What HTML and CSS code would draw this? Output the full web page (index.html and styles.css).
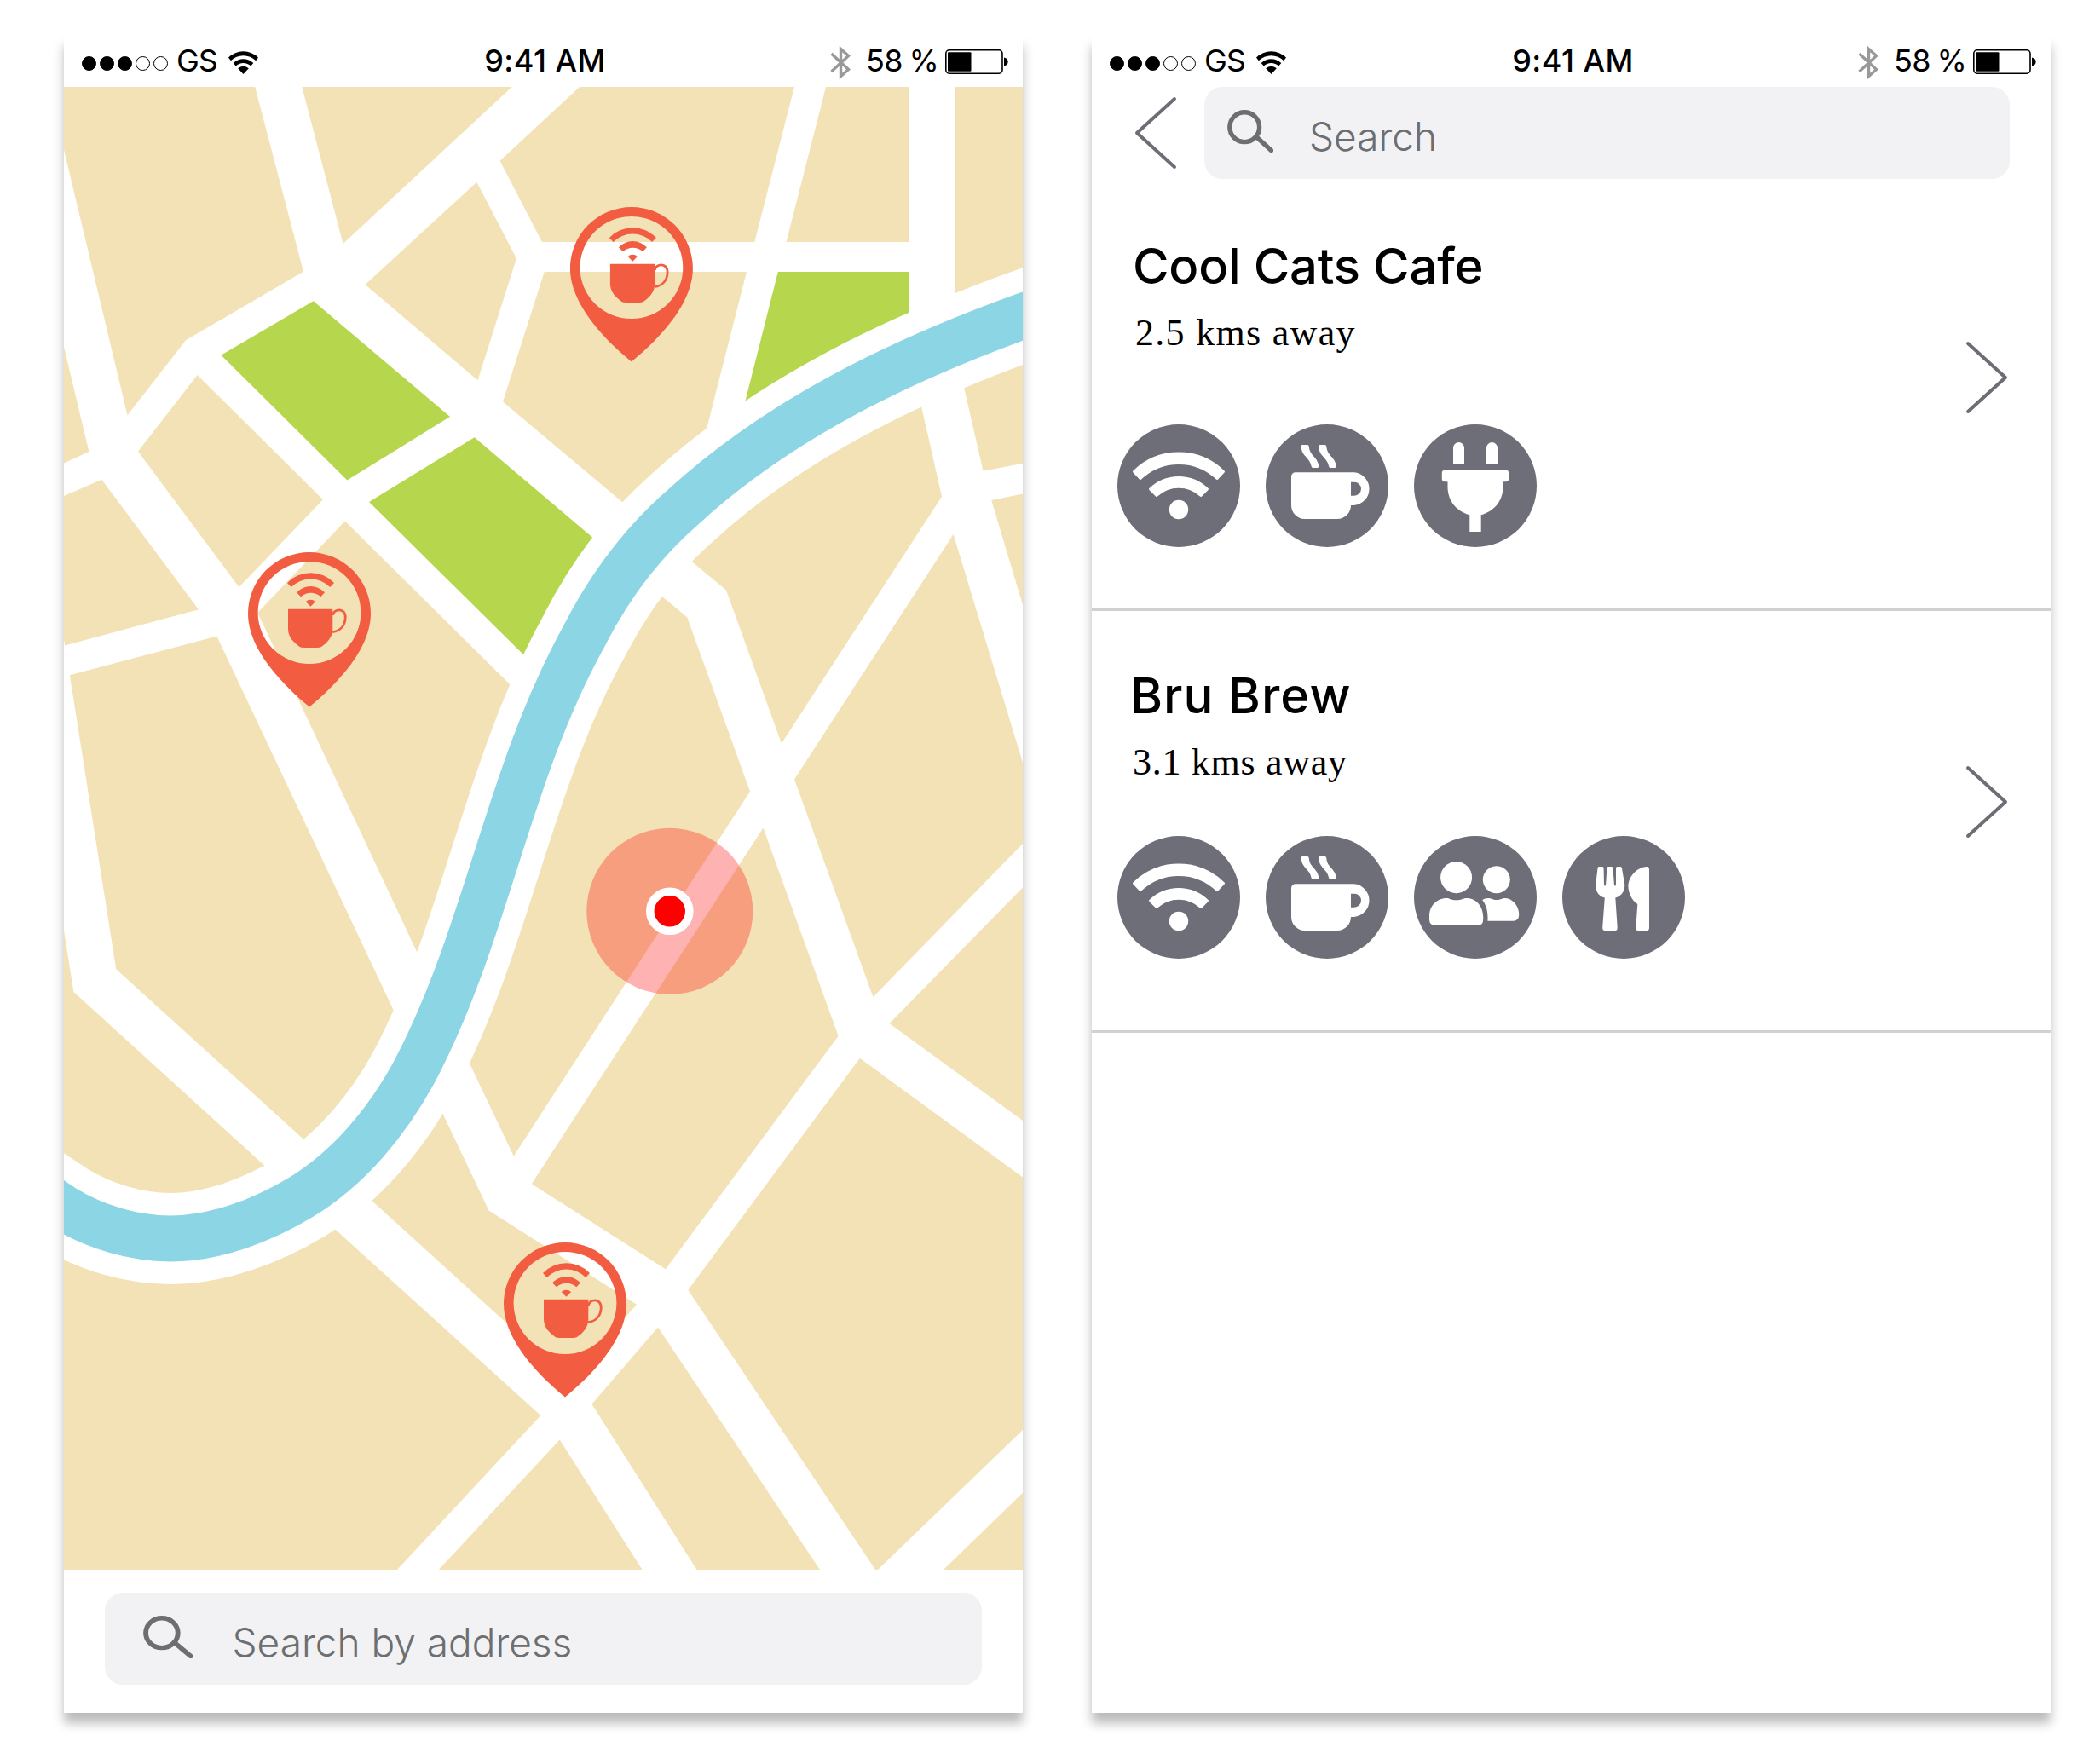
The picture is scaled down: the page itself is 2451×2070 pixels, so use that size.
FILE: index.html
```html
<!DOCTYPE html>
<html lang="en">
<head>
<meta charset="utf-8">
<title>Cafe finder</title>
<link rel="stylesheet" href="styles.css">
</head>
<body>
<svg class="sprite" aria-hidden="true">
  <symbol id="wifi-small" viewBox="0 0 35 27">
    <path d="M0 7.5A25 25 0 0 1 35 7.5L32.2 11.2A21 21 0 0 0 2.8 11.2ZM5.7 14A17 17 0 0 1 29.3 14L26.3 17.5A12.5 12.5 0 0 0 8.7 17.5ZM11.2 20.3A9 9 0 0 1 23.8 20.3L17.5 27Z"/>
  </symbol>
  <symbol id="bluetooth" viewBox="0 0 24 39">
    <path d="M1.5 9L21.5 27.5L12.5 35.5V3.500L21.500 11.500L1.500 30" fill="none" stroke="#999" stroke-width="3.400"/>
  </symbol>
  <symbol id="battery" viewBox="0 0 74 29">
    <rect x=".8" y=".8" width="66.200" height="27.400" rx="4" fill="#fff" stroke="#000" stroke-width="1.600"/>
    <rect x="3" y="3.200" width="27.500" height="22.600" rx="1"/>
    <path d="M69 9.500C75.200 10.500 75.200 18.500 69 19.500Z"/>
  </symbol>
  <symbol id="magnifier" viewBox="0 0 54 50" preserveAspectRatio="none">
    <g fill="none" stroke="#6d6e70" stroke-width="5.400">
      <circle cx="20.200" cy="20.200" r="17.400"/>
      <path d="M35 32.500L51.500 47.500" stroke-linecap="round"/>
    </g>
  </symbol>
  <symbol id="pin" viewBox="0 0 144 182">
    <path fill-rule="evenodd" d="M72 181.500C30 147 0 108 0 72A72 72 0 0 1 144 72C144 108 114 147 72 181.500ZM11.600 71A60.400 60 0 0 0 132.400 71A60.400 60 0 0 0 11.600 71Z"/>
    <path d="M46 36A38.200 38.200 0 0 1 101 36L96.200 41A32 32 0 0 0 50.700 41ZM57 47.300A22.300 22.300 0 0 1 90 47.300L85.300 52.300A17 17 0 0 0 62 52.300ZM67.800 58A8 8 0 0 1 79 58L73.400 63.700Z"/>
    <path d="M47 66.700H99.300V90C99.300 100 92 107 86 111Q84 112 81 112H66Q62 112 60.500 111C54 106 47 100 47 90Z"/>
    <path d="M99.500 74C100 66.500 114.500 64 114.200 77C113.800 87 107.500 92.500 99 93.700" fill="none" stroke="#f25c40" stroke-width="2.800"/>
  </symbol>
  <symbol id="wifi" viewBox="0 0 144 144">
    <g stroke="#fff" stroke-width="3" stroke-linejoin="round">
      <path d="M19.500 55.500A75 75 0 0 1 124.500 55.500L117 63.500A65 65 0 0 0 27 63.500Z"/>
      <path d="M38.500 76A48 48 0 0 1 105.500 76L98 83.500A38 38 0 0 0 46 83.500Z"/>
    </g>
    <circle cx="72" cy="100" r="11.200"/>
  </symbol>
  <symbol id="coffee" viewBox="0 0 144 144">
    <path fill-rule="evenodd" d="M35 56.300H103.500A19.400 19.400 0 0 1 103.500 95H100A16 16 0 0 1 84 111H46A16 16 0 0 1 30 95V61.300A5 5 0 0 1 35 56.300ZM100 67.700V83.700H104A8 8 0 0 0 104 67.700Z"/>
    <path d="M43 24H49Q50.600 24 50.800 26C51.500 37 61 38 62.300 49Q62.500 51 60.500 51H55.500Q54 51 53.500 49C52 39 42.500 38 41.500 26Q41.500 24 43 24Z"/>
    <path d="M63.500 24H69.500Q71.100 24 71.300 26C72 37 81.500 38 82.800 49Q83 51 81 51H76Q74.500 51 74 49C72.500 39 63 38 62 26Q62 24 63.500 24Z"/>
  </symbol>
  <symbol id="plug" viewBox="0 0 144 144">
    <path d="M46 47V27.500A6.500 6.500 0 0 1 59 27.500V47ZM85 47V27.500A6.500 6.500 0 0 1 98 27.500V47Z"/>
    <rect x="32.800" y="53.500" width="78.400" height="13.700" rx="3.500"/>
    <path d="M39.500 66H104.500V73C104.500 90 94 102 78.700 106.300V126H65.300V106.300C50 102 39.500 90 39.500 73Z"/>
  </symbol>
  <symbol id="people" viewBox="0 0 144 144">
    <circle cx="49.600" cy="48.700" r="18.500"/>
    <circle cx="96.800" cy="51.300" r="16"/>
    <path d="M25 105Q18 105 18 98V94C18 82 27 73 38 73C42 73 43 75.300 49.600 75.300C56 75.300 58 73 62 73C73 73 81.200 83 81.200 95V98Q81.200 105 75 105Z"/>
    <path d="M80.200 75Q83 73 87 73C91 73 92 75 97 75C102 75 103 73 107 73C116 73 123.200 83 123.200 92Q123.200 99.700 116 99.700H86.400C87 90 85.500 82 80.200 75Z"/>
  </symbol>
  <symbol id="food" viewBox="0 0 144 144">
    <path d="M43 36H47Q48.600 36 48.600 38L49 58.300H51L52.400 38Q52.500 36 54 36H58Q59.500 36 59.500 38L61 58.300H63V38Q63 36 64.500 36H68.300Q69.800 36 70 38L73.200 57C73.500 65 69 71 62.300 72.500L64.700 107.500Q64.700 111 62 111H50Q47.200 111 47.200 107.500L49.800 72.500C43 71 38.800 65 39.200 57L41.500 38Q41.500 36 43 36Z"/>
    <path d="M99 36Q102 36 102 39V108Q102 111 99 111H89Q86 111 86.300 108L88.300 80C82 76 77.400 67 77.400 59C77.400 48 87 37 99 36Z"/>
  </symbol>
  <symbol id="chevron" viewBox="0 0 50 86">
    <path d="M3 3L47 43L3 83" fill="none" stroke="#6d6d76" stroke-width="4" stroke-linecap="round" stroke-linejoin="round"/>
  </symbol>
</svg>

<main class="board">
  <section class="screen">
    <header class="status">
      <div class="status-left">
        <span class="signal"><i class="dot on"></i><i class="dot on"></i><i class="dot on"></i><i class="dot"></i><i class="dot"></i></span>
        <span class="carrier">GS</span>
        <svg class="status-wifi"><use href="#wifi-small"/></svg>
      </div>
      <span class="time">9:41 AM</span>
      <div class="status-right">
        <svg class="status-bt"><use href="#bluetooth"/></svg>
        <span class="charge">58 %</span>
        <svg class="status-battery"><use href="#battery"/></svg>
      </div>
    </header>

    <svg class="map" viewBox="75 102 1125 1740">
      <g fill="#f3e2b5">
        <path d="M75 102H299.200L356 318.700L218 399.300L149.500 487.300L75 175.700Z"/>
        <path d="M354.300 102H600.700L402.500 286Z"/>
        <path d="M680 102H932L885.300 284H636L586.600 188.700Z"/>
        <path d="M559.400 213.700L606 303.300L560.500 446.300L428.500 334Z"/>
        <path d="M969 102H1066.700V284H922.500Z"/>
        <path d="M1120 102H1200V371L1120 400Z"/>
        <path d="M638.700 319H876L829.400 502L820 539L750 606L730 589L590 471.500Z"/>
        <path d="M231.600 440L379 586.300L280.400 689L162 529.800Z"/>
        <path d="M75 407L104.400 530L75 543.500Z"/>
        <path d="M75 582L119.300 562.800L233 715.300L76 757.500L75 750Z"/>
        <path d="M81.800 792.300L254.400 746.600L462 1186L475 1213L450 1300L375 1354L136.200 1137.200Z"/>
        <path d="M75 1092L86.400 1164L310.600 1368L330 1386L200 1430L75 1400Z"/>
        <path d="M404.800 611.500L597.600 802.500L615 819L560 990L503 1147L489.200 1117.200L302.200 719Z"/>
        <path d="M790 641L852 692.500L916.900 872.400L1105 582.700L1080.400 474L1072.600 440L930 540Z"/>
        <path d="M1122 415L1200 390V543.700L1153.500 552.800Z"/>
        <path d="M1163.200 587L1200 579.600V710Z"/>
        <path d="M1118.600 627L1200 895V990L1024.400 1170L932 914.400Z"/>
        <path d="M760 686L806.200 724.200L880 928.700L602.700 1356.700L551 1248L540 1225L600 1040L640 950L700 800Z"/>
        <path d="M895.500 971.500L983.600 1215.700L781 1489.300L623.700 1389.200Z"/>
        <path d="M1043.500 1201L1200 1041.600V1315Z"/>
        <path d="M1008.800 1241.800L1200 1381.500V1678L1030 1842H1027L807.300 1513.700Z"/>
        <path d="M1107 1842L1200 1751.700V1842Z"/>
        <path d="M772 1557.400L962 1842H817.500L694.400 1647.700Z"/>
        <path d="M656.700 1689.500L753.500 1842H514.800Z"/>
        <path d="M508 1283L519.600 1307L573.500 1420.400L746.900 1530.800L669 1620.500L436.500 1409.300L425 1398Z"/>
        <path d="M375 1426L393.700 1443L634.400 1661L466 1842H75V1440L200 1480Z"/>
      </g>
      <g fill="#b6d64d">
        <path d="M912.800 319H1066.700V400L867 500Z"/>
        <path d="M367.700 353.300L528 489L407.300 563.500L259.400 416.800Z"/>
        <path d="M556.700 513.200L695 630.400L710 643L680 720L630 784L613.500 767.500L433 589Z"/>
      </g>
      <g fill="none">
        <path stroke="#fff" stroke-width="107" d="M1260 350L1200 371C1057 423 915 491 801.500 595C753 637 714 690 685 747C594 912 572 1095 486 1258C454 1317 409 1371 353 1405C308 1432 253 1453.500 200 1453.500C157 1453.500 112 1440 75 1417.500L20 1381"/>
        <path stroke="#8cd5e4" stroke-width="54" d="M1260 350L1200 371C1057 423 915 491 801.500 595C753 637 714 690 685 747C594 912 572 1095 486 1258C454 1317 409 1371 353 1405C308 1432 253 1453.500 200 1453.500C157 1453.500 112 1440 75 1417.500L20 1381"/>
      </g>
      <g>
        <circle cx="785.800" cy="1069.300" r="97.500" fill="#f00" fill-opacity=".3"/>
        <circle cx="785.800" cy="1069.300" r="23" fill="#f00" stroke="#fff" stroke-width="9.600"/>
      </g>
      <g fill="#f25c40">
        <use href="#pin" x="668.900" y="243" width="144" height="182"/>
        <use href="#pin" x="291" y="648" width="144" height="182"/>
        <use href="#pin" x="591" y="1458" width="144" height="182"/>
      </g>
    </svg>

    <footer class="footer">
      <div class="search search-map">
        <svg class="search-icon"><use href="#magnifier"/></svg>
        <span class="search-text">Search by address</span>
      </div>
    </footer>
  </section>

  <section class="screen">
    <header class="status">
      <div class="status-left">
        <span class="signal"><i class="dot on"></i><i class="dot on"></i><i class="dot on"></i><i class="dot"></i><i class="dot"></i></span>
        <span class="carrier">GS</span>
        <svg class="status-wifi"><use href="#wifi-small"/></svg>
      </div>
      <span class="time">9:41 AM</span>
      <div class="status-right">
        <svg class="status-bt"><use href="#bluetooth"/></svg>
        <span class="charge">58 %</span>
        <svg class="status-battery"><use href="#battery"/></svg>
      </div>
    </header>

    <nav class="topbar">
      <svg class="chevron back"><use href="#chevron"/></svg>
      <div class="search search-list">
        <svg class="search-icon"><use href="#magnifier"/></svg>
        <span class="search-text">Search</span>
      </div>
    </nav>

    <article class="cafe cool-cats">
      <div class="cafe-info">
        <h2 class="cafe-name">Cool Cats Cafe</h2>
        <p class="cafe-distance">2.5 kms away</p>
        <div class="amenities">
          <svg class="amenity"><use href="#wifi"/></svg>
          <svg class="amenity"><use href="#coffee"/></svg>
          <svg class="amenity"><use href="#plug"/></svg>
        </div>
      </div>
      <svg class="chevron"><use href="#chevron"/></svg>
    </article>

    <article class="cafe bru-brew">
      <div class="cafe-info">
        <h2 class="cafe-name">Bru Brew</h2>
        <p class="cafe-distance">3.1 kms away</p>
        <div class="amenities">
          <svg class="amenity"><use href="#wifi"/></svg>
          <svg class="amenity"><use href="#coffee"/></svg>
          <svg class="amenity"><use href="#people"/></svg>
          <svg class="amenity"><use href="#food"/></svg>
        </div>
      </div>
      <svg class="chevron"><use href="#chevron"/></svg>
    </article>
  </section>
</main>
</body>
</html>
```

FILE: styles.css
```css
* {
  box-sizing: border-box;
}

body {
  margin: 0;
  background: #fff;
  color: #000;
  font-family: Inter, Roboto, sans-serif;
}

svg {
  display: block;
  flex: none;
}

.sprite {
  display: none;
}

.board {
  display: flex;
  gap: 81px;
  padding: 42px 0 60px 75px;
}

.screen {
  display: flex;
  flex-direction: column;
  flex: none;
  width: 1125px;
  height: 1968px;
  background: #fff;
  box-shadow: 0 12px 12px rgba(0, 0, 0, 0.27);
}

/* Status bar */
.status {
  display: grid;
  grid-template-columns: 1fr auto 1fr;
  height: 60px;
  padding: 0 17px 0 21px;
  font-size: 36px;
  line-height: 58px;
  white-space: nowrap;
}

.status-left,
.status-right {
  display: flex;
}

.status-right {
  justify-content: flex-end;
}

.signal {
  display: flex;
  gap: 4px;
  padding-top: 23.5px;
}

.dot {
  width: 17px;
  height: 17px;
  border: 1.5px solid #000;
  border-radius: 50%;
}

.dot.on {
  background: #000;
}

.carrier {
  width: 57px;
  margin-left: 10px;
  letter-spacing: -1px;
}

.status-wifi {
  width: 35px;
  height: 27px;
  margin: 18px 0 0 4px;
}

.time {
  font-weight: 500;
  letter-spacing: 0.5px;
}

.status-bt {
  width: 24px;
  height: 39px;
  margin: 12px 18px 0 0;
}

.charge {
  width: 93px;
  letter-spacing: -0.6px;
  word-spacing: -2px;
}

.status-battery {
  width: 74px;
  height: 29px;
  margin-top: 16px;
}

/* Map screen */
.map {
  width: 1125px;
  height: 1740px;
}

.footer {
  padding: 27px 48px 0;
}

.search {
  display: flex;
  height: 108px;
  border-radius: 21px;
  background: #f2f2f5;
  color: #6d6e70;
}

.search-map {
  padding-left: 45px;
}

.search-list {
  flex: 1;
  padding-left: 27px;
}

.search-icon {
  width: 54px;
  height: 50px;
  margin-top: 27px;
}

.search-map .search-icon {
  width: 58.5px;
}

.search-text {
  margin-left: 42px;
  font-size: 46px;
  font-weight: 300;
  line-height: 116px;
}

.search-map .search-text {
  margin-left: 46px;
}

/* List screen */
.topbar {
  display: flex;
  padding: 0 48px 0 50px;
}

.chevron {
  width: 50px;
  height: 86px;
}

.chevron.back {
  margin: 11px 32px 0 0;
  transform: scaleX(-1);
}

.cafe {
  display: flex;
  justify-content: space-between;
  padding: 0 50px 0 30px;
  border-bottom: 3px solid #d1d1d3;
}

.cafe-name {
  margin: 0;
  font-size: 58px;
  font-weight: 500;
  line-height: 70px;
}

.cafe-distance {
  margin: 19px 0 0;
  font-family: "Liberation Serif", serif;
  font-size: 44px;
  line-height: 50px;
}

.amenities {
  display: flex;
  gap: 30px;
}

.amenity {
  width: 144px;
  height: 144px;
  border-radius: 50%;
  background: #6e6e78;
  fill: #fff;
}

.cool-cats {
  height: 507px;
  padding-top: 67px;
}

.cool-cats .cafe-name {
  padding-left: 18px;
  letter-spacing: -0.2px;
}

.cool-cats .cafe-distance {
  padding-left: 21px;
  letter-spacing: 1.3px;
}

.cool-cats .amenities {
  margin-top: 82px;
}

.cool-cats .chevron {
  margin-top: 123px;
}

.bru-brew {
  height: 495px;
  padding-top: 64px;
}

.bru-brew .cafe-name {
  padding-left: 15px;
  letter-spacing: 1px;
}

.bru-brew .cafe-distance {
  padding-left: 18px;
  letter-spacing: 0.7px;
}

.bru-brew .amenities {
  margin-top: 61px;
}

.bru-brew .chevron {
  margin-top: 117px;
}
```
